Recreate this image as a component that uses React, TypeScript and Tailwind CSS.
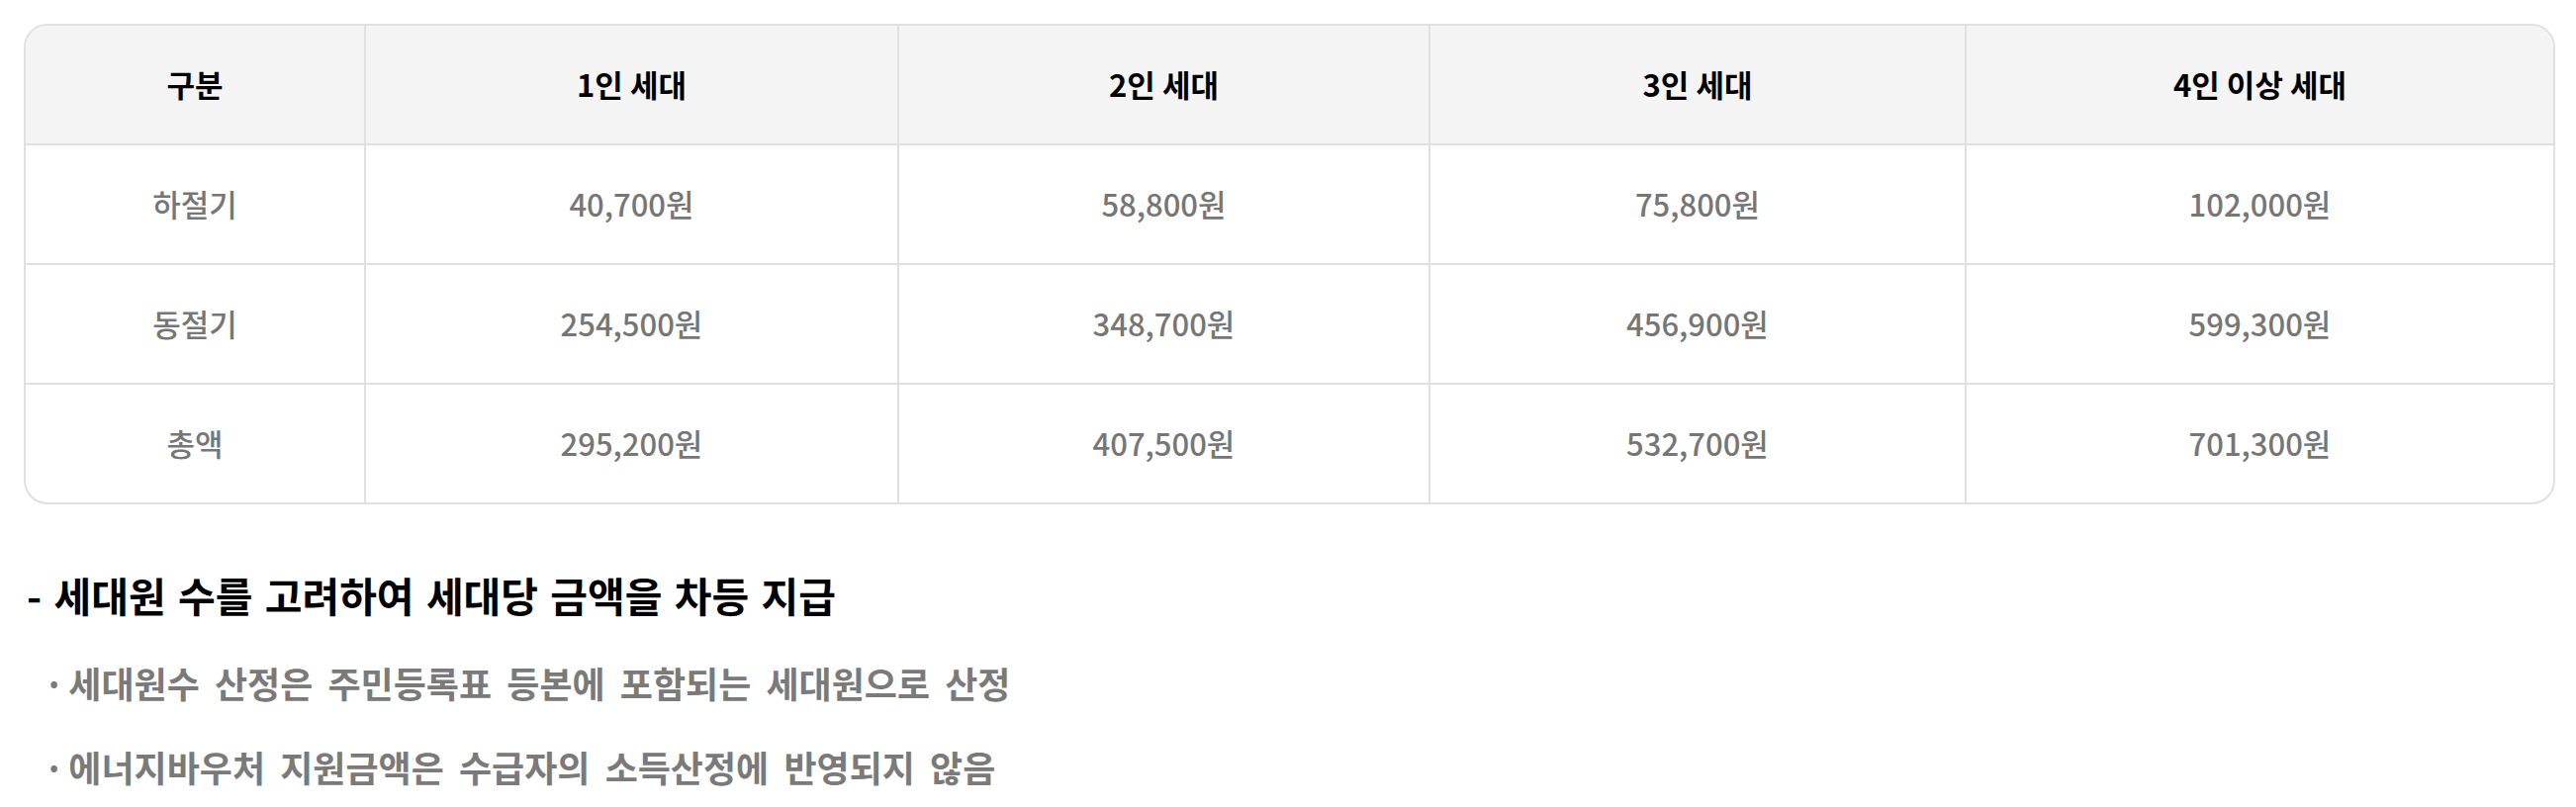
const headers = ['구분', '1인 세대', '2인 세대', '3인 세대', '4인 이상 세대'];

const rows = [
  ['하절기', '40,700원', '58,800원', '75,800원', '102,000원'],
  ['동절기', '254,500원', '348,700원', '456,900원', '599,300원'],
  ['총액', '295,200원', '407,500원', '532,700원', '701,300원'],
];

const notes = [
  '세대원수 산정은 주민등록표 등본에 포함되는 세대원으로 산정',
  '에너지바우처 지원금액은 수급자의 소득산정에 반영되지 않음',
];

export default function App() {
  return (
    <div
      className="min-h-screen bg-white pl-[24px] pr-[21px] pt-[24px]"
      style={{ fontFamily: '"Noto Sans CJK KR", "Noto Sans", sans-serif' }}
    >
      {/* Voucher table */}
      <div className="overflow-hidden rounded-[24px] border-2 border-[#e0e0e0]">
        <div className="grid grid-cols-[344px_539px_537px_542px_1fr]">
          {headers.map((h, i) => (
            <div
              key={h}
              className={`flex h-[121px] items-center justify-center border-b-2 border-[#e0e0e0] bg-[#f4f4f4] text-[31px] font-bold text-black ${
                i < headers.length - 1 ? 'border-r-2' : ''
              }`}
            >
              {h}
            </div>
          ))}
          {rows.map((row, r) =>
            row.map((cell, i) => (
              <div
                key={`${r}-${i}`}
                className={`flex items-center justify-center border-[#e0e0e0] text-[31px] font-medium text-[#767676] ${
                  r < rows.length - 1 ? 'h-[121px] border-b-2' : 'h-[119px]'
                } ${i < row.length - 1 ? 'border-r-2' : ''}`}
              >
                {cell}
              </div>
            ))
          )}
        </div>
      </div>

      {/* Notes */}
      <div className="mt-[63px]">
        <h3 className="pl-[3px] text-[41px] font-bold leading-[56px] text-black [word-spacing:3px]">
          - 세대원 수를 고려하여 세대당 금액을 차등 지급
        </h3>
        <ul className="mt-[19px]">
          {notes.map((n) => (
            <li
              key={n}
              className="flex pl-[20px] text-[36px] font-semibold leading-[85px] text-[#7a7a7a] [word-spacing:7px]"
            >
              <span className="mr-[4px]">·</span>
              <span>{n}</span>
            </li>
          ))}
        </ul>
      </div>
    </div>
  );
}
